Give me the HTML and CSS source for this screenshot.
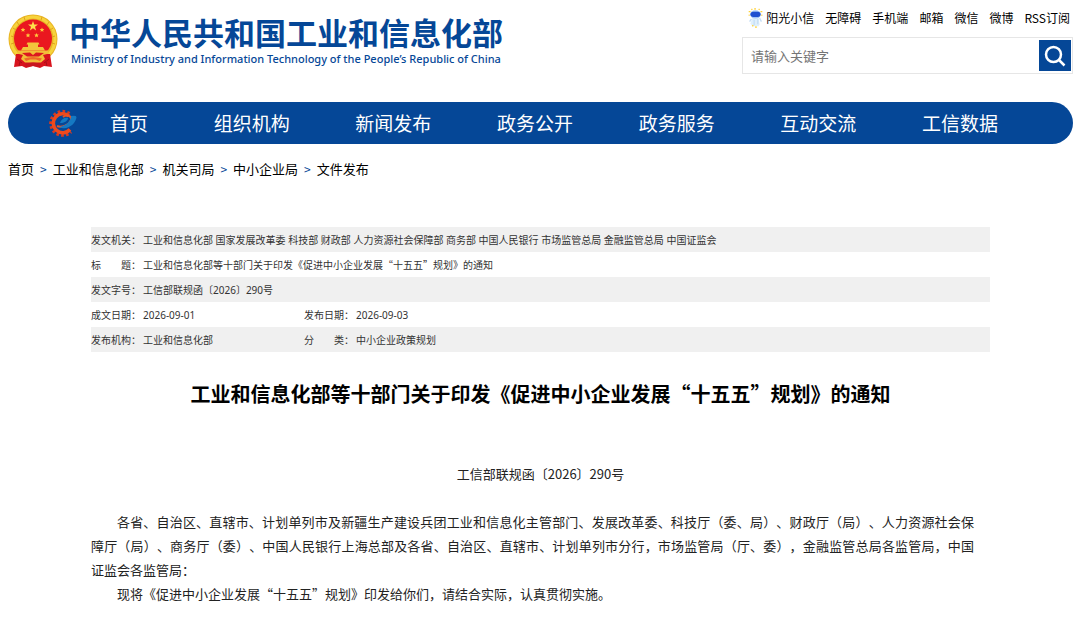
FILE: index.html
```html
<!DOCTYPE html>
<html lang="zh-CN">
<head>
<meta charset="utf-8">
<meta name="viewport" content="width=device-width, initial-scale=1">
<title>工业和信息化部等十部门关于印发《促进中小企业发展“十五五”规划》的通知</title>
<link rel="stylesheet" href="styles.css">
</head>
<body>
<header class="header">
  <a class="brand" href="#">
    <svg class="emblem" viewBox="0 0 50 55" aria-hidden="true">
      <circle cx="25" cy="25" r="24.500" fill="#e9b424"/>
      <circle cx="25" cy="25" r="22" fill="none" stroke="#f7d33c" stroke-width="3"/>
      <path d="M5 14l3 2M3 22l3 1M3 30l3-1M9 8l2 3M45 14l-3 2M47 22l-3 1M47 30l-3-1M41 8l-2 3M16 3l1 3M34 3l-1 3" stroke="#dfa01f"/>
      <path d="M8 40 L6 53 L14 52 L18 54 L25 52 L32 54 L36 52 L44 53 L42 40Z" fill="#d8141e"/>
      <circle cx="25" cy="24.500" r="19" fill="#ea171f"/>
      <path d="M25 7l1.200 3.500h3.800l-3 2.300 1.100 3.600-3.100-2.200-3.100 2.200 1.100-3.600-3-2.300h3.800z" fill="#ffe04a"/>
      <g fill="#ffc83c">
        <path id="star" d="M15 13.500l.7 1.500 1.600.1-1.200 1.100.4 1.600-1.500-.9-1.500.9.4-1.600-1.200-1.100 1.600-.1z"/>
        <use href="#star" x="19"/>
        <use href="#star" x="5" y="5.500"/>
        <use href="#star" x="13.500" y="5.500"/>
      </g>
      <path d="M19.500 28.500h11l1 2h-1.500v2.500h5l2 3.500H13l2-3.500h5v-2.500h-1.500z" fill="#f2c53c"/>
      <path d="M10 36.500h30l1 3-6 1.500 2 4-4 3.500H17L13 45l2-4-6-1.500z" fill="#f2bd38"/>
      <path d="M14 39l8-.5 3 2.500 3-2.500 8 .5-5 3.500H19z" fill="#dc1720"/>
      <path d="M16 44.500q9-3 18 0l-2 2.500-4-1.500h-6L18 47z" fill="#ef6a28"/>
      <path d="M17 50q8-3 16 0l-1 3-7-1-7 1z" fill="#c81620"/>
      <path d="M12 48l-1 4M38 48l1 4M9 45l5 4M41 45l-5 4" stroke="#a90e18" stroke-width="1"/>
    </svg>
    <span class="brand-text">
      <span class="brand-zh">中华人民共和国工业和信息化部</span>
      <span class="brand-en">Ministry of Industry and Information Technology of the People’s Republic of China</span>
    </span>
  </a>
  <div class="tools">
    <nav class="quick" aria-label="快捷链接">
      <a class="mascot-link" href="#">
        <svg class="mascot" viewBox="0 0 15 22" aria-hidden="true">
          <path d="M4 11q4-2 7 0l1 7-1 2H4l-2-3z" fill="#deeffc"/>
          <path d="M3 12l-2 3M12 11l2 4M6 13v6M10 12v6" stroke="#c6def5" stroke-width="1.500"/>
          <ellipse cx="7.500" cy="7" rx="6" ry="4.500" fill="#a5c5f5"/>
          <rect x="2" y="4" width="11" height="6" rx="3" fill="#1f4fd0"/>
          <path d="M7 0v2M3 1l1 1M12 1l-1 1M0 4h2M13 4h2M0 8h1M14 8h1M4 19l1 1M8 20v2" stroke="#ffd238" stroke-width="1.500"/>
        </svg>阳光小信</a>
      <a href="#">无障碍</a>
      <a href="#">手机端</a>
      <a href="#">邮箱</a>
      <a href="#">微信</a>
      <a href="#">微博</a>
      <a href="#">RSS订阅</a>
    </nav>
    <form class="search" role="search">
      <input class="search-input" type="text" placeholder="请输入关键字" aria-label="请输入关键字">
      <button class="search-button" type="button" aria-label="搜索">
        <svg class="search-icon" viewBox="0 0 22 22" aria-hidden="true">
          <circle cx="9.500" cy="9.500" r="7.500"/>
          <path d="M15 15l5.500 5.500"/>
        </svg>
      </button>
    </form>
  </div>
</header>

<nav class="main-nav" aria-label="主导航">
  <svg class="gear" viewBox="0 0 28 28" aria-hidden="true">
    <path d="M20.500 4.500A12 12 0 1 0 22 23" fill="none" stroke="#d83a20" stroke-width="3" stroke-dasharray="2.600 2.200"/>
    <path d="M20 7A9.500 9.500 0 1 0 21 20.500" fill="none" stroke="#ee4a1c" stroke-width="3.500"/>
    <path d="M8 17C13 19 20 16 22 11C23 7 18 5 14 8" fill="none" stroke="#ee5320" stroke-width="2"/>
    <path d="M10 18C17 17 22 12 22 7Q27 6 27.500 8C27 15 18 22 10 18Z" fill="#1579c2"/>
    <path d="M11 14C12 10 16 8 19 9C19 12 15 14 11 14Z" fill="#1579c2"/>
  </svg>
  <ul class="nav-list">
    <li><a href="#">首页</a></li>
    <li><a href="#">组织机构</a></li>
    <li><a href="#">新闻发布</a></li>
    <li><a href="#">政务公开</a></li>
    <li><a href="#">政务服务</a></li>
    <li><a href="#">互动交流</a></li>
    <li><a href="#">工信数据</a></li>
  </ul>
</nav>

<nav class="crumbs" aria-label="当前位置">
  <a href="#">首页</a><span class="sep">&gt;</span>
  <a href="#">工业和信息化部</a><span class="sep">&gt;</span>
  <a href="#">机关司局</a><span class="sep">&gt;</span>
  <a href="#">中小企业局</a><span class="sep">&gt;</span>
  <a href="#">文件发布</a>
</nav>

<main class="document">
  <table class="meta">
    <colgroup><col class="col-label"><col class="col-value"><col class="col-label"><col></colgroup>
    <tbody>
      <tr><th scope="row">发文机关：</th><td colspan="3">工业和信息化部 国家发展改革委 科技部 财政部 人力资源社会保障部 商务部 中国人民银行 市场监管总局 金融监管总局 中国证监会</td></tr>
      <tr><th scope="row">标　　题：</th><td class="subject" colspan="3">工业和信息化部等十部门关于印发《促进中小企业发展“十五五”规划》的通知</td></tr>
      <tr><th scope="row">发文字号：</th><td colspan="3">工信部联规函〔2026〕290号</td></tr>
      <tr><th scope="row">成文日期：</th><td>2026-09-01</td><th scope="row">发布日期：</th><td>2026-09-03</td></tr>
      <tr><th scope="row">发布机构：</th><td>工业和信息化部</td><th scope="row">分　　类：</th><td>中小企业政策规划</td></tr>
    </tbody>
  </table>
  <h1 class="title">工业和信息化部等十部门关于印发《促进中小企业发展“十五五”规划》的通知</h1>
  <article class="article">
    <p class="number">工信部联规函〔2026〕290号</p>
    <p>各省、自治区、直辖市、计划单列市及新疆生产建设兵团工业和信息化主管部门、发展改革委、科技厅（委、局）、财政厅（局）、人力资源社会保障厅（局）、商务厅（委）、中国人民银行上海总部及各省、自治区、直辖市、计划单列市分行，市场监管局（厅、委），金融监管总局各监管局，中国证监会各监管局：</p>
    <p>现将《促进中小企业发展“十五五”规划》印发给你们，请结合实际，认真贯彻实施。</p>
  </article>
</main>
</body>
</html>
```

FILE: styles.css
```css
* {
  box-sizing: border-box;
}

body {
  margin: 0;
  padding: 0 7px 24px 8px;
  background: #fff;
  color: #000;
  font-family: "Noto Sans CJK SC", "Noto Sans", sans-serif;
  font-size: 13px;
  line-height: 24px;
  text-spacing-trim: space-all;
}

a {
  color: inherit;
  text-decoration: none;
}

.header {
  display: flex;
  justify-content: space-between;
  align-items: flex-start;
  height: 102px;
  padding-top: 8px;
}

.brand {
  display: flex;
  gap: 11px;
  padding-top: 6px;
  color: #054797;
  white-space: nowrap;
}

.emblem {
  width: 50px;
  height: 55px;
}

.brand-text {
  display: flex;
  flex-direction: column;
}

.brand-zh {
  font-size: 31px;
  font-weight: 700;
  line-height: 36px;
}

.brand-en {
  padding-left: 2px;
  font-family: "Noto Sans", sans-serif;
  font-size: 11px;
  font-weight: 500;
  line-height: 18px;
}

.tools {
  width: 331px;
}

.quick {
  display: flex;
  justify-content: flex-end;
  gap: 11px;
  padding-right: 3px;
  font-size: 12px;
  line-height: 20px;
  white-space: nowrap;
}

.mascot-link {
  display: flex;
  gap: 3px;
}

.mascot {
  width: 15px;
  height: 20px;
}

.search {
  display: flex;
  height: 37px;
  margin-top: 9px;
  padding: 2px 1px 2px 2px;
  border: 1px solid #e6e6e6;
}

.search-input {
  flex: 1;
  min-width: 0;
  padding: 0 6px;
  border: 0;
  background: none;
  font: inherit;
}

.search-input::placeholder {
  color: #757575;
  opacity: 1;
}

.search-button {
  display: grid;
  place-items: center;
  width: 32px;
  padding: 0;
  border: 0;
  background: #054797;
}

.search-icon {
  width: 22px;
  height: 22px;
  fill: none;
  stroke: #fff;
  stroke-width: 2.5;
}

.main-nav {
  display: flex;
  align-items: center;
  height: 42px;
  padding-left: 41px;
  border-radius: 21px;
  background: #054797;
  color: #fff;
}

.gear {
  width: 28px;
  height: 28px;
}

.nav-list {
  display: flex;
  flex: 1;
  justify-content: space-between;
  margin: 0;
  padding: 0 75px 0 33px;
  font-size: 19px;
  list-style: none;
  white-space: nowrap;
}

.crumbs {
  display: flex;
  gap: 6px;
  padding-top: 13px;
}

.sep {
  color: #054797;
  font-size: 12px;
}

.document {
  width: 85%;
  max-width: 899px;
  min-width: 320px;
  margin: 46px auto 0;
}

@media (min-width: 900px) {
  .document {
    width: 899px;
  }
}

.meta {
  width: 100%;
  border-collapse: collapse;
  table-layout: fixed;
  color: #333;
  font-family: "Noto Sans", "Noto Sans CJK SC", sans-serif;
  font-size: 10px;
}

.meta .subject {
  font-family: "Noto Sans CJK SC", sans-serif;
}

.col-label {
  width: 52px;
}

.col-value {
  width: 161px;
}

.meta th,
.meta td {
  height: 25px;
  padding: 0;
  font-weight: 400;
  text-align: left;
}

.meta tr:nth-child(odd) {
  background: #f0f0f0;
}

.title {
  margin: 26px 0 0;
  font-size: 20px;
  font-weight: 700;
  line-height: 32px;
  text-align: center;
}

.article {
  margin-top: 52px;
  color: #222;
}

.article p {
  margin: 0;
  padding-right: 16px;
  text-align: justify;
  text-indent: 2em;
}

.article .number {
  margin-bottom: 24px;
  padding: 0;
  text-align: center;
  text-indent: 0;
}
```
